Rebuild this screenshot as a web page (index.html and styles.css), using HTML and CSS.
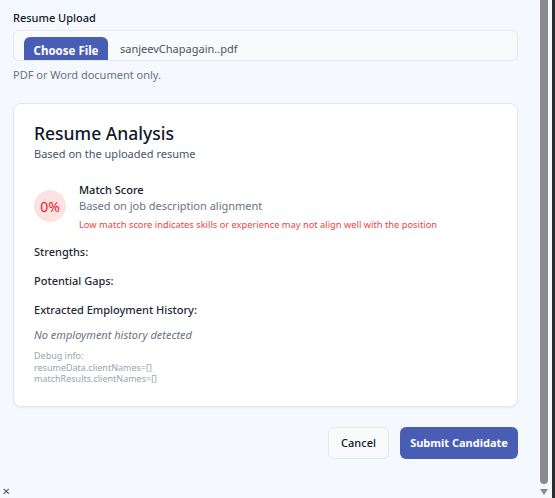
FILE: index.html
```html
<!DOCTYPE html>
<html>
<head>
<meta charset="utf-8">
<link rel="stylesheet" href="styles.css">
</head>
<body>
<div class="frame">
  <main class="page">
    <div class="field">
      <label class="label">Resume Upload</label>
      <div class="file-input">
        <span class="file-btn">Choose File</span>
        <span class="file-name">sanjeevChapagain..pdf</span>
      </div>
      <p class="hint">PDF or Word document only.</p>
    </div>

    <section class="card">
      <h2 class="card-title">Resume Analysis</h2>
      <p class="card-sub">Based on the uploaded resume</p>

      <div class="match">
        <div class="score">0%</div>
        <div class="match-text">
          <div class="match-title">Match Score</div>
          <div class="match-desc">Based on job description alignment</div>
          <div class="match-warn">Low match score indicates skills or experience may not align well with the position</div>
        </div>
      </div>

      <div class="section-title">Strengths:</div>
      <div class="section-title">Potential Gaps:</div>
      <div class="section-title">Extracted Employment History:</div>
      <p class="empty">No employment history detected</p>
      <div class="debug">
        <div>Debug info:</div>
        <div>resumeData.clientNames=[]</div>
        <div>matchResults.clientNames=[]</div>
      </div>
    </section>

    <div class="actions">
      <button class="btn btn-cancel">Cancel</button>
      <button class="btn btn-primary">Submit Candidate</button>
    </div>
  </main>
  <div class="scrollbar">
    <div class="track">
      <div class="thumb"></div>
      <div class="arrow"></div>
    </div>
    <div class="edge"></div>
  </div>
  <span class="close">✕</span>
</div>
</body>
</html>
```

FILE: styles.css
```css
* { box-sizing: border-box; }
html, body { margin: 0; padding: 0; height: 100%; }
body {
  background: #f5f8fc;
  font-family: "Noto Sans", "Open Sans", sans-serif;
  color: #111827;
  overflow: hidden;
}
.frame {
  display: flex;
  height: 498px;
  position: relative;
}
.page {
  flex: 1;
  padding: 10px 22px 0 13px;
}
.label {
  display: block;
  font-size: 11px;
  line-height: 16px;
  font-weight: 500;
  color: #111827;
  margin-bottom: 4px;
}
.file-input {
  height: 31px;
  border: 1px solid #e2e8f0;
  border-radius: 6px;
  background: #f8fafc;
  display: flex;
  align-items: flex-end;
  padding-left: 10px;
  overflow: hidden;
}
.file-btn {
  width: 84px;
  height: 24px;
  background: #4a5db4;
  color: #fff;
  font-size: 11.5px;
  font-weight: 700;
  border-radius: 6px 6px 0 0;
  display: flex;
  align-items: center;
  justify-content: center;
  margin-bottom: -1px;
  padding-top: 3px;
}
.file-name {
  font-size: 11px;
  color: #4b5563;
  margin-left: 12px;
  align-self: center;
  margin-top: 6px;
}
.hint {
  margin: 6px 0 0;
  font-size: 11px;
  line-height: 16px;
  color: #6b7280;
}
.card {
  margin-top: 20px;
  background: #fff;
  border: 1px solid #e2e8f0;
  border-radius: 8px;
  box-shadow: 0 1px 2px rgba(15, 23, 42, 0.05);
  padding: 17px 20px 21px 20px;
}
.card-title {
  margin: 0;
  font-size: 17.5px;
  line-height: 24px;
  font-weight: 500;
  color: #111827;
}
.card-sub {
  margin: 0;
  font-size: 11px;
  line-height: 18px;
  color: #475569;
}
.match {
  display: flex;
  align-items: center;
  gap: 13px;
  margin-top: 19px;
}
.score {
  width: 32px;
  height: 32px;
  border-radius: 50%;
  background: #fee2e2;
  color: #e11d28;
  font-size: 14px;
  display: flex;
  align-items: center;
  justify-content: center;
  flex: none;
  margin-top: -2px;
}
.match-title {
  font-size: 11px;
  line-height: 16px;
  font-weight: 500;
  color: #111827;
}
.match-desc {
  font-size: 11px;
  line-height: 16px;
  color: #6b7280;
}
.match-warn {
  font-size: 9.3px;
  line-height: 14px;
  color: #ef4444;
  margin-top: 4px;
}
.section-title {
  font-size: 11px;
  line-height: 16px;
  font-weight: 500;
  color: #1f2937;
  margin-top: 13px;
}
.match + .section-title { margin-top: 12px; }
.empty {
  margin: 9px 0 0;
  font-size: 11px;
  line-height: 16px;
  font-style: italic;
  color: #6b7280;
}
.debug {
  margin-top: 7px;
  font-size: 9px;
  line-height: 11.5px;
  color: #9ca3af;
}
.actions {
  display: flex;
  justify-content: flex-end;
  gap: 11px;
  margin-top: 20px;
}
.btn {
  height: 32px;
  border-radius: 6px;
  font-family: inherit;
  font-size: 11px;
  padding: 0;
  cursor: pointer;
}
.btn-cancel {
  width: 61px;
  background: #f8fafc;
  border: 1px solid #e2e8f0;
  color: #111827;
  font-weight: 500;
}
.btn-primary {
  width: 118px;
  background: #4a5db4;
  border: none;
  color: #fff;
  font-weight: 700;
}
.scrollbar {
  width: 15px;
  flex: none;
  display: flex;
}
.track {
  width: 12px;
  display: flex;
  flex-direction: column;
  align-items: flex-start;
}
.thumb {
  width: 8px;
  height: 484px;
  background: #8a8a8a;
  border-radius: 0 0 4px 4px;
}
.arrow {
  margin-top: 5px;
  width: 0;
  height: 0;
  border-left: 4px solid transparent;
  border-right: 4px solid transparent;
  border-top: 6px solid #8a8a8a;
}
.edge {
  width: 3px;
  background: #2b2b2b;
}
.close {
  position: absolute;
  left: 2px;
  bottom: 2px;
  font-size: 10px;
  line-height: 10px;
  color: #4b5563;
}
```
